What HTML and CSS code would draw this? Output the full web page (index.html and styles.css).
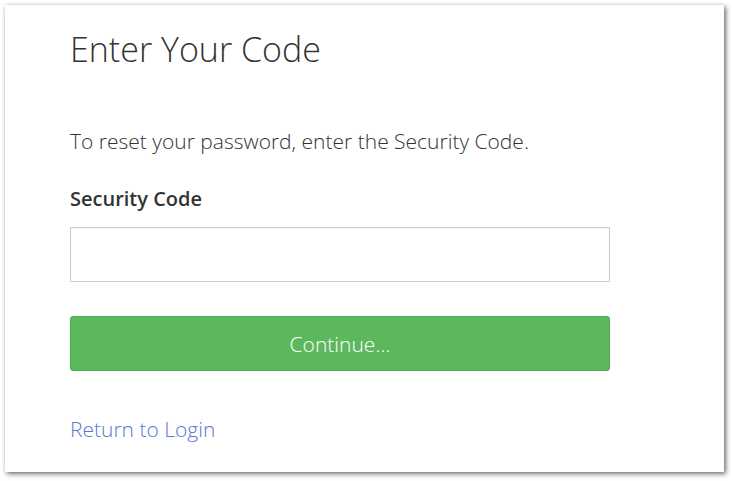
FILE: index.html
```html
<!DOCTYPE html>
<html>
<head>
<meta charset="utf-8">
<link rel="stylesheet" href="styles.css">
</head>
<body>
<div class="card">
  <h1 class="title">Enter Your Code</h1>
  <p class="intro">To reset your password, enter the Security Code.</p>
  <label class="label" for="code">Security Code</label>
  <input class="input" id="code" type="text">
  <button class="btn">Continue...</button>
  <a class="link" href="#">Return to Login</a>
</div>
</body>
</html>
```
FILE: styles.css
```css
html, body {
  margin: 0;
  padding: 0;
  background: #ffffff;
}
body {
  padding: 5px 9px 9px 5px;
  font-family: "Open Sans", "Liberation Sans", sans-serif;
  color: #333333;
}
.card {
  box-sizing: border-box;
  width: 719px;
  height: 467px;
  background: #ffffff;
  box-shadow: 2px 2px 5px rgba(0,0,0,0.55), 0 0 3px rgba(0,0,0,0.12);
  padding: 21px 0 0 65px;
  display: flex;
  flex-direction: column;
  align-items: flex-start;
}
.title {
  margin: 0;
  font-size: 34px;
  font-weight: 300;
  line-height: 46px;
  color: #333;
}
.intro {
  margin: 55px 0 0 0;
  font-size: 21px;
  font-weight: 300;
  line-height: 28px;
}
.label {
  margin-top: 30px;
  font-size: 20px;
  font-weight: 600;
  line-height: 28px;
}
.input {
  box-sizing: border-box;
  margin-top: 14px;
  width: 540px;
  height: 55px;
  border: 1px solid #cccccc;
  border-radius: 0;
  background: #fff;
  box-shadow: inset 0 1px 1px rgba(0,0,0,0.05);
}
.btn {
  box-sizing: border-box;
  margin-top: 34px;
  width: 540px;
  height: 55px;
  background: #5cb85c;
  border: 1px solid #4cae4c;
  border-radius: 3px;
  color: #fff;
  font-family: "Open Sans", "Liberation Sans", sans-serif;
  font-size: 21px;
  font-weight: 300;
}
.link {
  margin-top: 44px;
  font-size: 21px;
  font-weight: 300;
  line-height: 28px;
  color: #5a78d0;
  text-decoration: none;
}
```
